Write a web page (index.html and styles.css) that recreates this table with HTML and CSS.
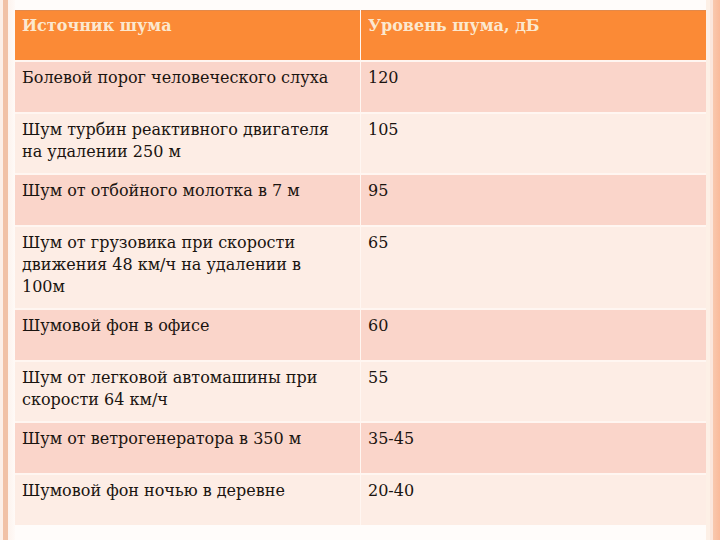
FILE: index.html
```html
<!DOCTYPE html>
<html lang="ru">
<head>
<meta charset="utf-8">
<link rel="stylesheet" href="styles.css">
</head>
<body>
<div class="page">
  <div class="deco-left"></div>
  <div class="main">
    <div class="table">
      <div class="cell head">Источник шума</div>
      <div class="cell head">Уровень шума, дБ</div>

      <div class="cell odd">Болевой порог человеческого слуха</div>
      <div class="cell odd">120</div>

      <div class="cell even">Шум турбин реактивного двигателя<br>на удалении 250 м</div>
      <div class="cell even">105</div>

      <div class="cell odd">Шум от отбойного молотка в 7 м</div>
      <div class="cell odd">95</div>

      <div class="cell even">Шум от грузовика при скорости<br>движения 48 км/ч на удалении в<br>100м</div>
      <div class="cell even">65</div>

      <div class="cell odd">Шумовой фон в офисе</div>
      <div class="cell odd">60</div>

      <div class="cell even">Шум от легковой автомашины при<br>скорости 64 км/ч</div>
      <div class="cell even">55</div>

      <div class="cell odd">Шум от ветрогенератора в 350 м</div>
      <div class="cell odd">35-45</div>

      <div class="cell even">Шумовой фон ночью в деревне</div>
      <div class="cell even">20-40</div>
    </div>
  </div>
  <div class="deco-right"></div>
</div>
</body>
</html>
```
FILE: styles.css
```css
html, body {
  margin: 0;
  padding: 0;
  background: #fffcfa;
}
.page {
  display: flex;
  width: 720px;
  height: 540px;
  overflow: hidden;
}
.deco-left {
  width: 15px;
  flex: none;
  background: linear-gradient(to right, #fcefe8 0, #fcefe8 3px, #f1c1a6 3px, #f1c1a6 8px, #fdf3ee 8px, #fffaf7 15px);
}
.deco-right {
  width: 15px;
  flex: none;
  background: linear-gradient(to right, #fdf0e6 0, #fdf0e6 4px, #fbe6dc 4px, #fbe6dc 7px, #f9c8ae 7px, #fab898 15px);
}
.main {
  flex: 1;
  padding-top: 10px;
}
.table {
  display: grid;
  grid-template-columns: 345px 345px;
  gap: 2px 1px;
  background: #fff6f1;
  font-family: "DejaVu Serif", "Liberation Serif", serif;
  font-size: 16px;
  line-height: 22px;
  color: #1a1410;
}
.cell {
  min-height: 50px;
  box-sizing: border-box;
  padding: 5px 7px 10px 7px;
  white-space: nowrap;
}
.head {
  background: #fb8a36;
  color: #fbe8cf;
  font-weight: bold;
  font-size: 16px;
  border-top: 1px solid #e3894a;
  padding-top: 4px;
}
.odd {
  background: #fad5ca;
}
.even {
  background: #fdede5;
}
```
